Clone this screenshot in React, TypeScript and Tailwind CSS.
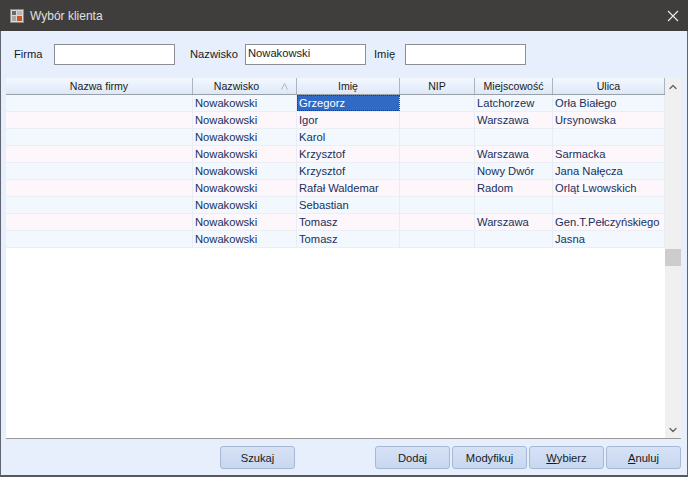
import React from 'react';
import { ChevronUp, ChevronDown } from 'lucide-react';

const font = { fontFamily: '"Liberation Sans", Arial, sans-serif' };

const columns = [
  { label: 'Nazwa firmy', width: 'w-[187px]' },
  { label: 'Nazwisko', width: 'w-[104px]' },
  { label: 'Imię', width: 'w-[103px]' },
  { label: 'NIP', width: 'w-[75px]' },
  { label: 'Miejscowość', width: 'w-[78px]' },
  { label: 'Ulica', width: 'w-[112px]' },
];

const rows = [
  ['', 'Nowakowski', 'Grzegorz', '', 'Latchorzew', 'Orła Białego'],
  ['', 'Nowakowski', 'Igor', '', 'Warszawa', 'Ursynowska'],
  ['', 'Nowakowski', 'Karol', '', '', ''],
  ['', 'Nowakowski', 'Krzysztof', '', 'Warszawa', 'Sarmacka'],
  ['', 'Nowakowski', 'Krzysztof', '', 'Nowy Dwór', 'Jana Nałęcza'],
  ['', 'Nowakowski', 'Rafał Waldemar', '', 'Radom', 'Orląt Lwowskich'],
  ['', 'Nowakowski', 'Sebastian', '', '', ''],
  ['', 'Nowakowski', 'Tomasz', '', 'Warszawa', 'Gen.T.Pełczyńskiego'],
  ['', 'Nowakowski', 'Tomasz', '', '', 'Jasna'],
];

const Field: React.FC<{ label: string; value?: string; labelWidth: string }> = ({ label, value, labelWidth }) => (
  <div className="flex items-center">
    <span className={`${labelWidth} text-[11.2px] text-[#1a1a1a]`}>{label}</span>
    <div className="w-[121px] h-[21px] bg-white border border-[#8a8f96] px-[2px] text-[11.2px] leading-[17px] text-[#1a1a1a]">
      {value}
    </div>
  </div>
);

const Btn: React.FC<{ width: string; children: React.ReactNode }> = ({ width, children }) => (
  <button className={`${width} h-[23px] rounded-[3px] border border-[#a5b9d6] bg-gradient-to-b from-[#d6e1f5] to-[#c8d7f0] text-[11.2px] leading-[20px] text-[#1a1a1a]`}>
    {children}
  </button>
);

export default function App() {
  return (
    <div style={font} className="w-[688px] h-[477px] flex flex-col overflow-hidden bg-[#e6effb]">
      <div className="h-[31px] shrink-0 bg-[#3f3e3c] flex items-center pl-[10px] pr-[10px] text-[#e0e0e0] text-[12px]">
        <svg width="14" height="14" viewBox="0 0 14 14" className="mr-[6px]">
          <rect x="0.5" y="0.5" width="13" height="13" fill="#d8d8d8" stroke="#8a8a8a" />
          <rect x="2" y="2" width="4" height="4" fill="#6a6a6a" />
          <rect x="7" y="2" width="5" height="4" fill="#b9b9b9" />
          <rect x="2" y="7" width="4" height="5" fill="#a8a8a8" />
          <rect x="7" y="7" width="5" height="5" fill="#d2521c" />
        </svg>
        <span>Wybór klienta</span>
        <svg width="12" height="12" viewBox="0 0 12 12" className="ml-auto mr-[-1px]" fill="none" stroke="#e8e8e8" strokeWidth="1.2">
          <path d="M1 1 L11 11 M11 1 L1 11" />
        </svg>
      </div>

      <div className="flex-1 flex flex-col min-h-0 border-l-[1px] border-[#5f6470] border-b-[2px] border-r-[1px] border-b-[#55585e]">
        <div className="h-[47px] shrink-0 flex items-center pl-[13px]">
          <Field label="Firma" labelWidth="w-[40px]" />
          <div className="w-[15px]" />
          <Field label="Nazwisko" value="Nowakowski" labelWidth="w-[55px]" />
          <div className="w-[8px]" />
          <Field label="Imię" labelWidth="w-[31px]" />
        </div>

        <div className="flex-1 min-h-0 flex ml-[5px] mr-[6px] bg-white border-b border-[#9a9a9a]">
          <div className="w-[659px] shrink-0 flex flex-col">
            <div className="flex h-[17px] shrink-0 border-b border-[#9aa0a8] bg-gradient-to-b from-[#f4f8fe] to-[#dde8f7]">
              {columns.map((col, i) => (
                <div
                  key={col.label}
                  className={`${col.width} relative shrink-0 text-center text-[10.6px] leading-[16px] text-[#1a1a1a] border-r border-[#a9b4c4] ${i === 1 ? 'pr-[16px]' : ''}`}
                >
                  {col.label}
                  {i === 1 && (
                    <svg width="7" height="7" viewBox="0 0 7 7" className="absolute right-[8px] top-[5px]" fill="none" stroke="#b0b6bf">
                      <path d="M0.5 6.5 L3.5 0.5 L6.5 6.5" />
                    </svg>
                  )}
                </div>
              ))}
            </div>
            {rows.map((row, r) => (
              <div
                key={r}
                className={`flex h-[17px] shrink-0 border-b border-[#eaeef5] ${r % 2 === 0 ? 'bg-[#f2f8fe]' : 'bg-[#fdf6fb]'}`}
              >
                {row.map((cell, c) => {
                  const selected = r === 0 && c === 2;
                  return (
                    <div
                      key={c}
                      className={`${columns[c].width} shrink-0 px-[2px] text-[11.2px] leading-[16px] whitespace-nowrap overflow-hidden border-r border-[#e8edf4] ${
                        selected ? 'bg-[#316ac5] text-white outline-1 outline-dotted outline-offset-[-1px] outline-[#1c3f7a]' : 'text-[#17305c]'
                      }`}
                    >
                      {cell}
                    </div>
                  );
                })}
              </div>
            ))}
          </div>
          <div className="flex-1 flex flex-col bg-[#f0f0f0]">
            <div className="h-[17px] flex items-center justify-center">
              <ChevronUp size={12} strokeWidth={2.5} className="text-[#606060]" />
            </div>
            <div className="flex-1 relative">
              <div className="absolute left-0 right-0 top-[154px] h-[17px] bg-[#cdcdcd]" />
            </div>
            <div className="h-[17px] flex items-center justify-center">
              <ChevronDown size={12} strokeWidth={2.5} className="text-[#606060]" />
            </div>
          </div>
        </div>

        <div className="h-[36px] shrink-0 flex items-start pt-[7px] pl-[219px]">
          <Btn width="w-[75px]">Szukaj</Btn>
          <div className="w-[80px]" />
          <div className="flex gap-[2px]">
            <Btn width="w-[75px]">Dodaj</Btn>
            <Btn width="w-[75px]">Modyfikuj</Btn>
            <Btn width="w-[75px]">
              <span className="underline">W</span>ybierz
            </Btn>
            <Btn width="w-[75px]">
              <span className="underline">A</span>nuluj
            </Btn>
          </div>
        </div>
      </div>
    </div>
  );
}
